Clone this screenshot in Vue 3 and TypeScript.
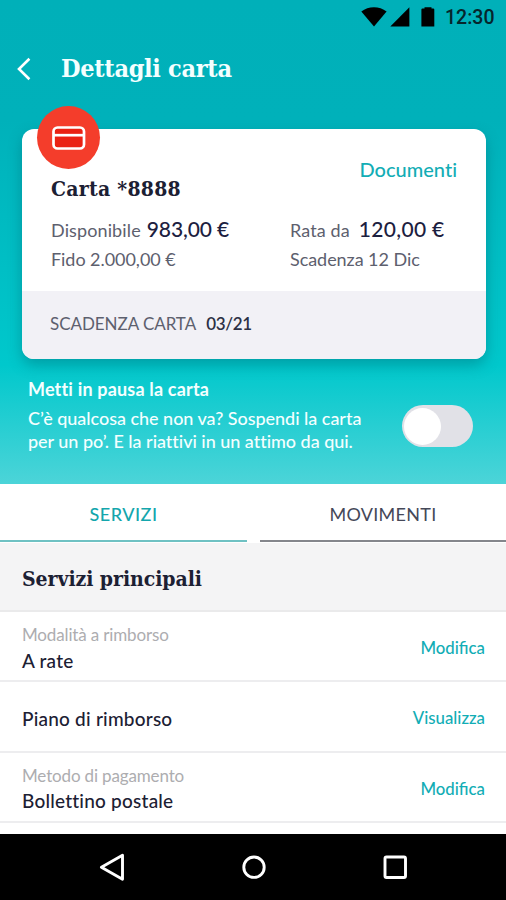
<script setup lang="ts">
import { ref } from 'vue'

interface Service {
  label?: string
  value: string
  action: string
}

const services: Service[] = [
  { label: 'Modalità a rimborso', value: 'A rate', action: 'Modifica' },
  { value: 'Piano di rimborso', action: 'Visualizza' },
  { label: 'Metodo di pagamento', value: 'Bollettino postale', action: 'Modifica' },
]

const activeTab = ref<'servizi' | 'movimenti'>('servizi')
const paused = ref(false)
</script>

<template>
  <div class="screen">
    <header class="hero">
      <div class="status">
        <svg class="wifi" width="26" height="20" viewBox="0 0 26 20">
          <path d="M0.3 4.6C7.4-1.1 18.4-1.1 25.6 4.6L13 19.6Z" />
        </svg>
        <svg class="signal" width="20" height="20" viewBox="0 0 20 20"><path d="M19.4 0.3V19.4H0.3Z" /></svg>
        <svg class="battery" width="14" height="20" viewBox="0 0 14 20">
          <path d="M3.5 0.3H10.5V1.4H12.2Q13.3 1.4 13.3 2.4V19.5H0.4V2.4Q0.4 1.4 1.5 1.4H3.5Z" />
        </svg>
        <span class="clock">12:30</span>
      </div>

      <div class="titlebar">
        <svg class="back" width="14" height="24" viewBox="0 0 14 24"><path d="M12.4 1.8L2 12L12.4 22.2" /></svg>
        <h1>Dettagli carta</h1>
      </div>

      <section class="card">
        <div class="badge">
          <svg width="34" height="24" viewBox="0 0 34 24">
            <rect class="fill" x="1.5" y="1.5" width="30.5" height="21" rx="4" />
            <path d="M2 9.2H32" />
          </svg>
        </div>
        <div class="card-main">
          <div class="left">
            <h2>Carta *8888</h2>
            <p class="amount"><span>Disponibile</span><b>983,00 €</b></p>
            <p class="detail">Fido 2.000,00 €</p>
          </div>
          <div class="right">
            <a class="docs">Documenti</a>
            <p class="amount"><span>Rata da</span><b class="due">120,00 €</b></p>
            <p class="detail">Scadenza 12 Dic</p>
          </div>
        </div>
        <div class="card-foot"><span>SCADENZA CARTA</span><b>03/21</b></div>
      </section>

      <section class="pause">
        <div class="pause-text">
          <h3>Metti in pausa la carta</h3>
          <p>C’è qualcosa che non va? Sospendi la carta</p>
          <p>per un po’. E la riattivi in un attimo da qui.</p>
        </div>
        <button class="toggle" :class="{ on: paused }" aria-label="Pausa" @click="paused = !paused"><i></i></button>
      </section>
    </header>

    <nav class="tabs">
      <button class="tab first" :class="{ active: activeTab === 'servizi' }" @click="activeTab = 'servizi'">
        <span>SERVIZI</span>
      </button>
      <button class="tab second" :class="{ active: activeTab === 'movimenti' }" @click="activeTab = 'movimenti'">
        <span>MOVIMENTI</span>
      </button>
    </nav>

    <main class="list">
      <h2 class="list-title">Servizi principali</h2>
      <div v-for="item in services" :key="item.value" class="row">
        <div class="row-text" :class="{ single: !item.label }">
          <small v-if="item.label">{{ item.label }}</small>
          <strong>{{ item.value }}</strong>
        </div>
        <a>{{ item.action }}</a>
      </div>
    </main>

    <footer class="navbar">
      <svg width="27" height="29" viewBox="0 0 27 29"><path d="M23.5 2.2V26.2L2.4 14.2Z" /></svg>
      <svg width="25" height="25" viewBox="0 0 25 25"><circle cx="12" cy="12.2" r="10.2" /></svg>
      <svg width="25" height="25" viewBox="0 0 25 25"><rect x="2" y="2" width="20.5" height="20.5" rx="1.5" /></svg>
    </footer>
  </div>
</template>

<style>
body {
  margin: 0;
}
</style>

<style scoped>
.screen {
  width: 506px;
  height: 900px;
  display: flex;
  flex-direction: column;
  overflow: hidden;
  background: #fff;
  color: #1c2033;
  font-family: Lato, sans-serif;
}
h1,
h2,
h3,
p {
  margin: 0;
  white-space: nowrap;
}
button {
  border: 0;
  padding: 0;
  background: none;
  font: inherit;
}
.hero {
  height: 484px;
  flex: none;
  background: linear-gradient(#00b0b9 0, #00b1ba 120px, #00c8cc 365px, #4cd4d8 484px);
}
.status {
  height: 36px;
  display: flex;
  align-items: center;
  box-sizing: border-box;
  padding: 0 11px 2px 0;
  justify-content: flex-end;
}
.signal {
  margin-left: 3px;
}
.battery {
  margin-left: 11px;
}
.clock {
  width: 50px;
  margin-left: 10px;
  padding-top: 2px;
  font: 500 19.5px/20px Roboto, sans-serif;
  color: #06262c;
}
.titlebar {
  height: 66px;
  display: flex;
  align-items: center;
  padding-left: 17px;
}
.back {
  fill: none;
  stroke: #fff;
  stroke-width: 2.6;
}
h1 {
  margin-left: 30px;
  font: 700 25px/30px 'DejaVu Serif Condensed', 'DejaVu Serif', serif;
  letter-spacing: -0.3px;
  color: #f4ffff;
}
.card {
  position: relative;
  width: 464px;
  height: 230px;
  margin: 27px 0 0 22px;
  border-radius: 12px;
  background: #fff;
  box-shadow: 0 6px 14px rgba(0, 95, 105, 0.4);
}
.badge {
  position: absolute;
  left: 15px;
  top: -23px;
  width: 63px;
  height: 63px;
  border-radius: 50%;
  background: #f43d2b;
  display: flex;
  align-items: center;
  justify-content: center;
}
.badge svg {
  fill: none;
  stroke: #fff;
  stroke-width: 2.7;
}
.badge .fill {
  fill: #ea2113;
}
.card-main {
  height: 162px;
  display: flex;
}
.left {
  width: 239px;
  padding: 45px 0 0 29px;
}
.right {
  flex: 1;
  padding: 26px 29px 0 0;
}
.card h2 {
  font: 700 21px/30px 'DejaVu Serif Condensed', 'DejaVu Serif', serif;
  letter-spacing: 0.25px;
}
.docs {
  display: block;
  height: 28px;
  margin-bottom: 31px;
  text-align: right;
  font-size: 20px;
  line-height: 28px;
  font-weight: 500;
  font-variant-ligatures: no-common-ligatures;
  color: #12adb5;
}
.amount {
  display: flex;
  align-items: baseline;
  height: 30px;
  line-height: 30px;
  font-size: 18px;
  letter-spacing: 0.12px;
  color: #5d606e;
}
.left .amount {
  margin-top: 10px;
}
.amount b {
  margin-left: 6px;
  font-size: 21px;
  font-weight: 500;
  letter-spacing: -0.1px;
  color: #1c2040;
}
.amount .due {
  margin-left: 9px;
  letter-spacing: 0.3px;
}
.detail {
  line-height: 30px;
  font-size: 18px;
  letter-spacing: -0.05px;
  color: #5d606e;
}
.card-foot {
  display: flex;
  align-items: center;
  height: 64px;
  padding: 0 0 4px 28px;
  border-radius: 0 0 12px 12px;
  background: #f2f1f6;
  font-size: 17px;
  letter-spacing: -0.05px;
  color: #5d606e;
}
.card-foot b {
  margin-left: 10px;
  font-weight: 600;
  letter-spacing: -0.3px;
  color: #2c3045;
}
.pause {
  display: flex;
  align-items: flex-start;
  justify-content: space-between;
  padding: 17px 33px 0 28px;
  color: #f4ffff;
  font-variant-ligatures: no-common-ligatures;
}
.pause h3 {
  font-size: 18px;
  line-height: 26px;
  margin-bottom: 5px;
  letter-spacing: 0.18px;
}
.pause p {
  font-size: 18px;
  line-height: 22.5px;
  font-weight: 500;
  letter-spacing: -0.03px;
}
.toggle {
  width: 71px;
  height: 42px;
  margin-top: 29px;
  border-radius: 21px;
  background: #e1e1e7;
}
.toggle i {
  display: block;
  width: 37px;
  height: 37px;
  margin-left: 2px;
  border-radius: 50%;
  background: #fff;
}
.toggle.on i {
  margin-left: 32px;
}
.tabs {
  display: flex;
  gap: 13px;
  height: 58px;
  flex: none;
}
.tab {
  box-sizing: border-box;
  flex: 0 0 247px;
  height: 58px;
  padding-top: 4px;
  border-bottom: 2px solid #84868c;
  font-size: 18px;
  letter-spacing: 0.3px;
  color: #454858;
}
.tab.second {
  flex-basis: 246px;
}
.tab.active {
  border-color: #6fc1c3;
  color: #14a6ad;
  font-weight: 500;
  letter-spacing: 0.5px;
}
.list {
  flex: 1;
}
.list-title {
  box-sizing: border-box;
  height: 70px;
  padding: 21px 0 0 22px;
  border-top: 1px solid #fff;
  border-bottom: 2px solid #eaeaeb;
  background: #f4f4f5;
  font: 700 21px/30px 'DejaVu Serif Condensed', 'DejaVu Serif', serif;
  letter-spacing: -0.05px;
}
.row {
  display: flex;
  align-items: center;
  justify-content: space-between;
  box-sizing: border-box;
  height: 70.3px;
  padding: 3px 21px 0 22px;
  border-bottom: 2px solid #ededef;
}
.row-text.single {
  padding-top: 2px;
}
.row small,
.row strong {
  display: block;
  line-height: 25.5px;
  font-size: 19px;
  font-weight: 500;
  letter-spacing: 0.22px;
  font-variant-ligatures: no-common-ligatures;
}
.row small {
  font-size: 17px;
  font-weight: 400;
  letter-spacing: -0.15px;
  color: #adadb0;
}
.row a {
  font-size: 16.8px;
  color: #12adb5;
  font-weight: 500;
}
.navbar {
  display: flex;
  align-items: center;
  justify-content: center;
  gap: 116px;
  height: 66px;
  flex: none;
  background: #000;
}
.navbar svg {
  fill: none;
  stroke: #fff;
  stroke-width: 2.9;
  stroke-linejoin: round;
}
</style>
